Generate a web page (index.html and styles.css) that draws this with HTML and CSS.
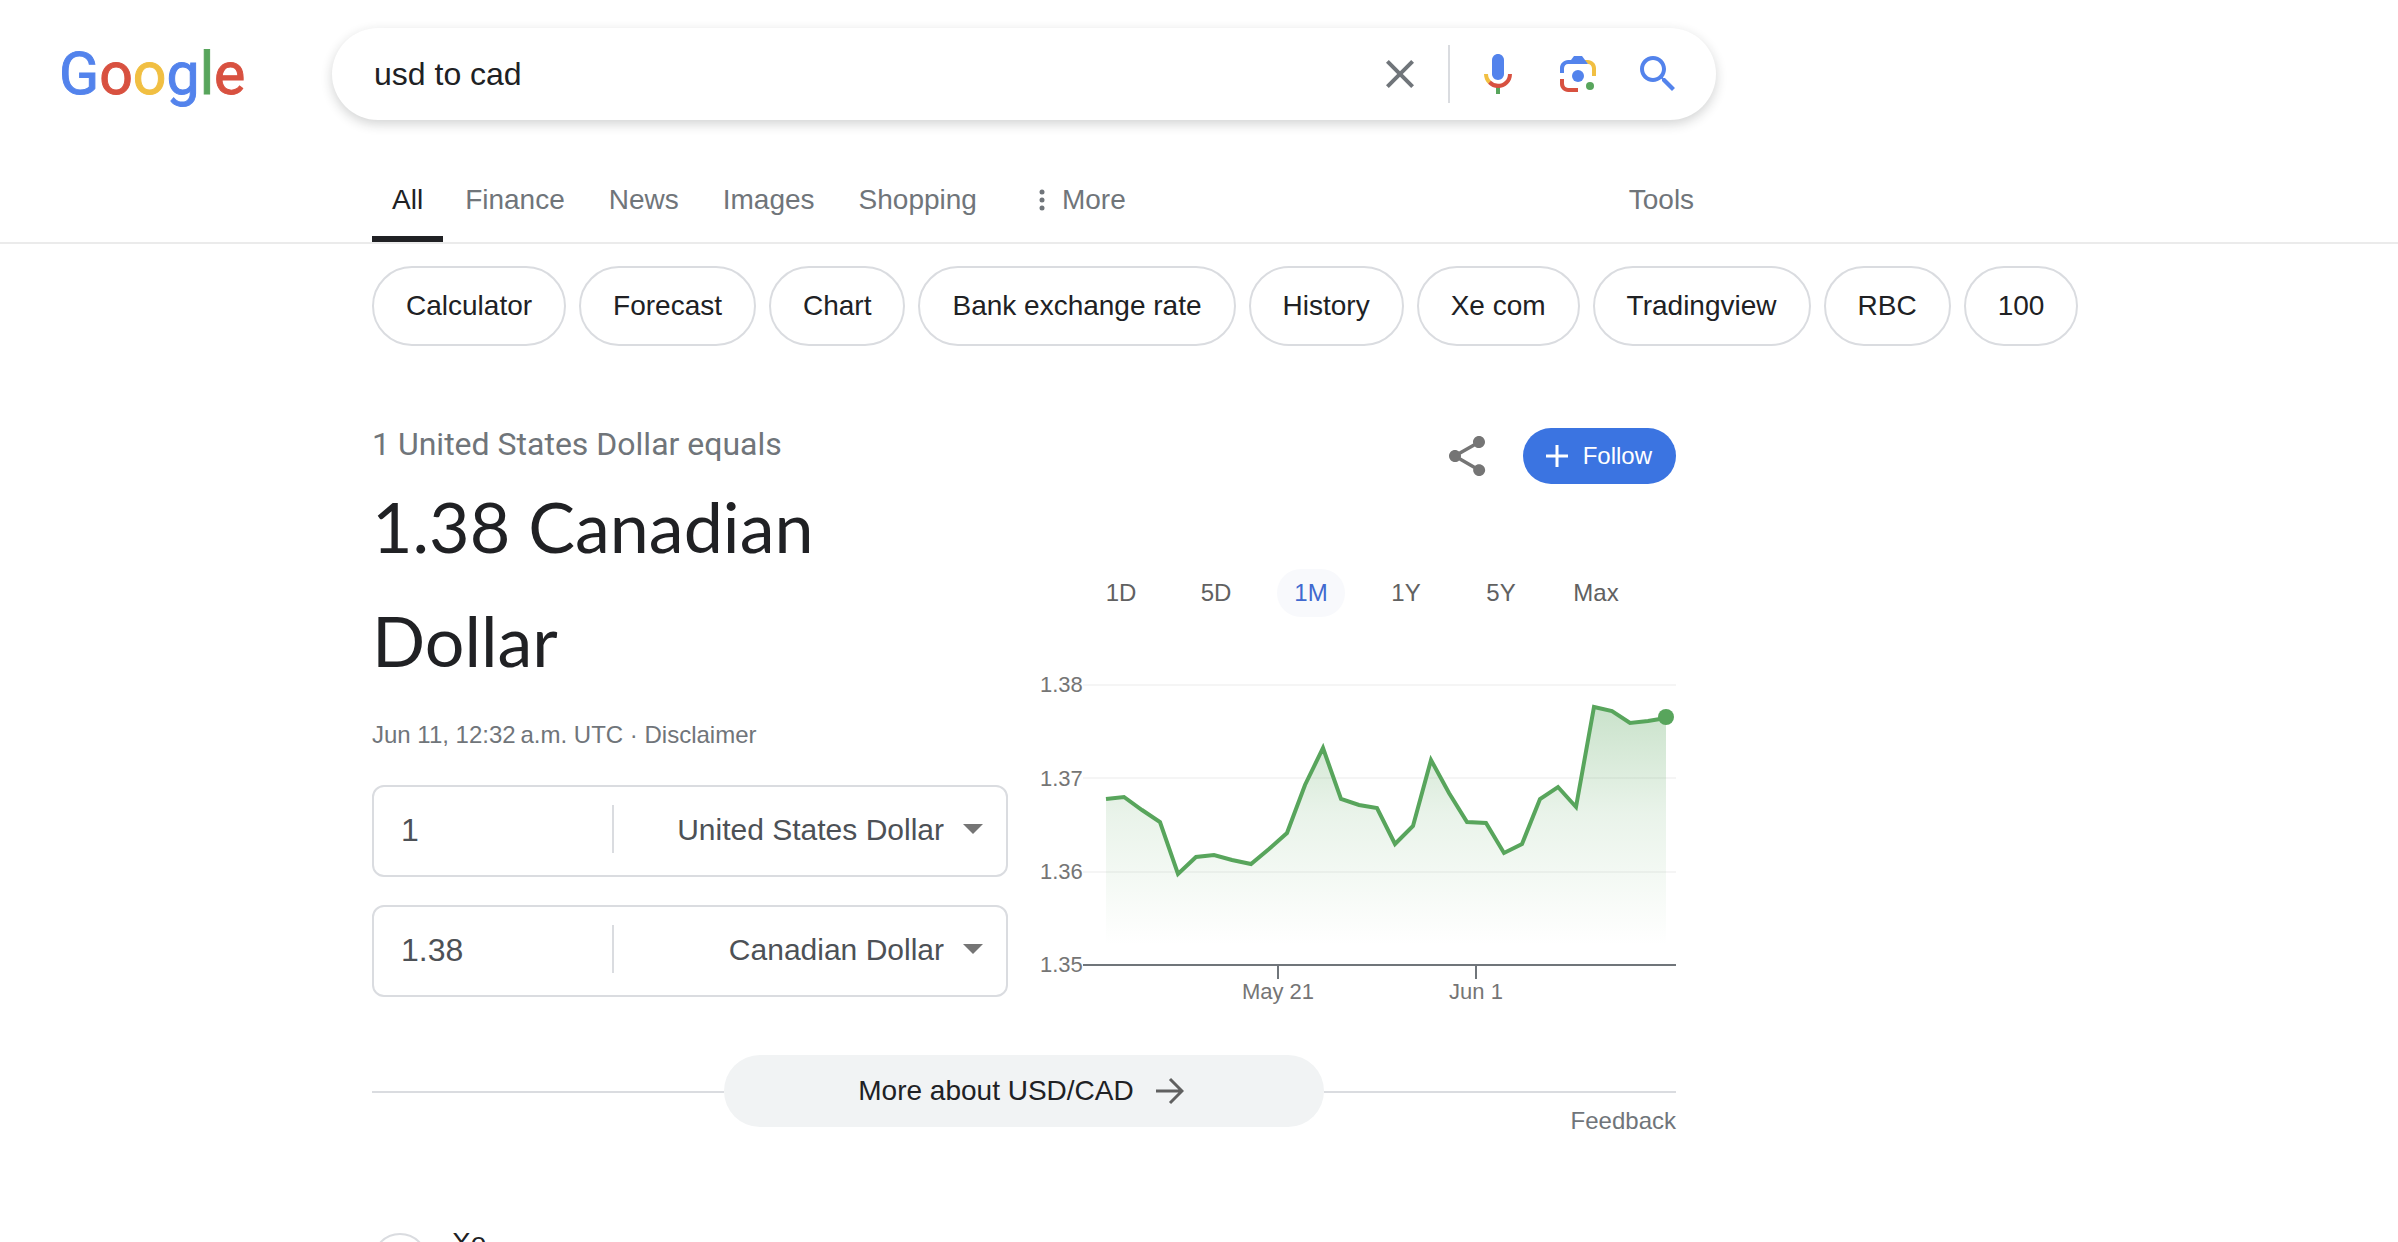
FILE: index.html
```html
<!DOCTYPE html>
<html lang="en">
<head>
    <meta charset="UTF-8">
    <meta name="viewport" content="width=device-width, initial-scale=1.0">
    <title>usd to cad - Google Search</title>
    <link rel="stylesheet" href="styles.css">
</head>
<body>
    <header class="header">
        <a class="logo" href="#" aria-label="Google"><span class="blue">G</span><span class="red">o</span><span class="yellow">o</span><span class="blue">g</span><span class="green">l</span><span class="red">e</span></a>
        <form class="search" role="search">
            <input class="search-input" type="text" aria-label="Search" value="usd to cad">
            <button class="icon-button" type="button" aria-label="Clear">
                <svg width="48" height="48" viewBox="0 0 24 24" fill="#70757a"><path d="M19 6.41L17.59 5 12 10.59 6.41 5 5 6.41 10.59 12 5 17.59 6.41 19 12 13.41 17.59 19 19 17.59 13.41 12z"/></svg>
            </button>
            <span class="search-divider"></span>
            <button class="icon-button" type="button" aria-label="Search by voice">
                <svg width="48" height="48" viewBox="0 0 24 24">
                    <path fill="#5383ec" d="M12 15c1.66 0 3-1.31 3-2.97V5.01C15 3.35 13.66 2 12 2S9 3.34 9 5.01v7.02C9 13.69 10.34 15 12 15z"/>
                    <path fill="#58a55c" d="M11 18.08h2V22h-2z"/>
                    <path fill="#f1bf42" d="M7.05 16.87C5.78 15.54 5 14.04 5 12h2c0 1.45.56 2.42 1.47 3.38v.32l-1.15 1.18z"/>
                    <path fill="#d85140" d="M12 16.93a4.97 5.25 0 0 1-3.54-1.55l-1.41 1.49C8.31 18.21 10.07 19 12 19c3.87 0 6.99-2.92 6.99-7H17c0 2.92-2.24 4.93-5 4.93z"/>
                </svg>
            </button>
            <button class="icon-button" type="button" aria-label="Search by image">
                <svg width="48" height="48" viewBox="0 0 192 192">
                    <circle fill="#58a55c" cx="144" cy="144" r="16"/>
                    <circle fill="#5383ec" cx="96" cy="104" r="24"/>
                    <path fill="#d85140" d="M24 135.2c0 18.11 14.69 32.8 32.8 32.8H96v-16l-40.1-.1c-8.8 0-15.9-8.19-15.9-17.9v-18H24v19.2z"/>
                    <path fill="#f1bf42" d="M168 72.8c0-18.11-14.69-32.8-32.8-32.8H116l20 16c8.8 0 16 8.29 16 18v30h16V72.8z"/>
                    <path fill="#5383ec" d="M112 24H80L68 40H56.8C38.69 40 24 54.69 24 72.8V92h16V74c0-9.71 7.2-18 16-18h80l-24-32z"/>
                </svg>
            </button>
            <button class="icon-button" type="submit" aria-label="Google Search">
                <svg width="48" height="48" viewBox="0 0 24 24" fill="#5383ec"><path d="M15.5 14h-.79l-.28-.27C15.41 12.59 16 11.11 16 9.5 16 5.91 13.09 3 9.5 3S3 5.91 3 9.5 5.91 16 9.5 16c1.61 0 3.09-.59 4.23-1.57l.27.28v.79l5 4.99L20.49 19l-4.99-5zm-6 0C7.01 14 5 11.99 5 9.5S7.01 5 9.5 5 14 7.01 14 9.5 11.99 14 9.5 14z"/></svg>
            </button>
        </form>
    </header>

    <nav class="tabs">
        <a class="tab active" href="#">All</a>
        <a class="tab" href="#">Finance</a>
        <a class="tab" href="#">News</a>
        <a class="tab" href="#">Images</a>
        <a class="tab" href="#">Shopping</a>
        <button class="tab more" type="button">
            <svg width="6" height="24" viewBox="0 0 6 24" fill="#70757a"><circle cx="3" cy="4" r="2.5"/><circle cx="3" cy="12" r="2.5"/><circle cx="3" cy="20" r="2.5"/></svg>
            More
        </button>
        <button class="tab tools" type="button">Tools</button>
    </nav>

    <div class="chips">
        <a class="chip" href="#">Calculator</a>
        <a class="chip" href="#">Forecast</a>
        <a class="chip" href="#">Chart</a>
        <a class="chip" href="#">Bank exchange rate</a>
        <a class="chip" href="#">History</a>
        <a class="chip" href="#">Xe com</a>
        <a class="chip" href="#">Tradingview</a>
        <a class="chip" href="#">RBC</a>
        <a class="chip" href="#">100</a>
    </div>

    <main class="content">
        <section class="converter">
            <div class="rate">
                <div class="rate-from">1 United States Dollar equals</div>
                <h1 class="rate-to">1.38 Canadian Dollar</h1>
                <div class="rate-date">Jun 11, 12:32&#8239;a.m. UTC · <a href="#">Disclaimer</a></div>
                <div class="field">
                    <input class="amount" type="text" aria-label="Amount to convert" value="1">
                    <select class="currency" aria-label="Currency to convert from">
                        <option>United States Dollar</option>
                        <option>Canadian Dollar</option>
                    </select>
                    <svg class="arrow" width="20" height="10" viewBox="0 0 20 10"><path fill="#757575" d="M0 0h20L10 10z"/></svg>
                </div>
                <div class="field">
                    <input class="amount" type="text" aria-label="Converted amount" value="1.38">
                    <select class="currency" aria-label="Currency to convert to">
                        <option>Canadian Dollar</option>
                        <option>United States Dollar</option>
                    </select>
                    <svg class="arrow" width="20" height="10" viewBox="0 0 20 10"><path fill="#757575" d="M0 0h20L10 10z"/></svg>
                </div>
            </div>

            <div class="history">
                <div class="actions">
                    <button class="icon-button" type="button" aria-label="Share">
                        <svg width="48" height="48" viewBox="0 0 24 24" fill="#757575"><path d="M18 16.08c-.76 0-1.44.3-1.96.77L8.91 12.7c.05-.23.09-.46.09-.7s-.04-.47-.09-.7l7.05-4.11c.54.5 1.25.81 2.04.81 1.66 0 3-1.34 3-3s-1.34-3-3-3-3 1.34-3 3c0 .24.04.47.09.7L8.04 9.81C7.5 9.31 6.79 9 6 9c-1.66 0-3 1.34-3 3s1.34 3 3 3c.79 0 1.5-.31 2.04-.81l7.12 4.16c-.05.21-.08.43-.08.65 0 1.66 1.34 3 3 3s3-1.34 3-3-1.42-2.92-3.08-2.92z"/></svg>
                    </button>
                    <button class="follow" type="button">
                        <svg width="22" height="22" viewBox="0 0 22 22" fill="none" stroke="#fff" stroke-width="3"><path d="M11 0v22M0 11h22"/></svg>
                        Follow
                    </button>
                </div>
                <div class="ranges">
                    <button class="range" type="button">1D</button>
                    <button class="range" type="button">5D</button>
                    <button class="range active" type="button">1M</button>
                    <button class="range" type="button">1Y</button>
                    <button class="range" type="button">5Y</button>
                    <button class="range" type="button">Max</button>
                </div>
                <svg class="chart" viewBox="0 0 636 350" role="img" aria-label="USD to CAD, last month">
                    <defs>
                        <linearGradient id="fade" gradientUnits="userSpaceOnUse" x1="0" y1="47" x2="0" y2="285">
                            <stop offset="0" stop-color="#58a55c" stop-opacity="0.32"/>
                            <stop offset="0.45" stop-color="#58a55c" stop-opacity="0.13"/>
                            <stop offset="1" stop-color="#58a55c" stop-opacity="0"/>
                        </linearGradient>
                    </defs>
                    <path class="grid" d="M43 25H636M43 118H636M43 212H636"/>
                    <path fill="url(#fade)" d="M66 139L84 137L102 150L120 162L138 214L156 197L174 195L192 200L211 204L229 189L247 173L265 125L283 88L301 139L319 145L337 148L355 184L373 166L391 100L409 133L427 162L446 163L464 193L482 184L500 139L518 127L536 147L554 47L572 51L590 63L608 61L626 58V305H66Z"/>
                    <path class="axis" d="M43 305H636M238 305V319M436 305V319"/>
                    <path class="line" d="M66 139L84 137L102 150L120 162L138 214L156 197L174 195L192 200L211 204L229 189L247 173L265 125L283 88L301 139L319 145L337 148L355 184L373 166L391 100L409 133L427 162L446 163L464 193L482 184L500 139L518 127L536 147L554 47L572 51L590 63L608 61L626 58"/>
                    <circle cx="626" cy="57" r="8" fill="#58a55c"/>
                    <text x="0" y="32">1.38</text>
                    <text x="0" y="126">1.37</text>
                    <text x="0" y="219">1.36</text>
                    <text x="0" y="312">1.35</text>
                    <text class="date" x="238" y="339">May 21</text>
                    <text class="date" x="436" y="339">Jun 1</text>
                </svg>
            </div>
        </section>

        <div class="about">
            <a class="about-link" href="#">
                More about USD/CAD
                <svg width="28" height="28" viewBox="0 0 28 28" fill="none" stroke="#606060" stroke-width="3"><path d="M0 14H26M14 2L26 14L14 26"/></svg>
            </a>
        </div>
        <a class="feedback" href="#">Feedback</a>

        <article class="result">
            <span class="favicon">
                <svg width="36" height="36" viewBox="0 0 36 36"><circle cx="18" cy="18" r="18" fill="#f1f1f9"/><path fill="#8484b4" d="M19 2c4-1 8 1 11 5l-7 3-4-3z"/></svg>
            </span>
            <a class="site" href="#">Xe</a>
        </article>
    </main>
</body>
</html>
```
FILE: styles.css
```css
* {
    box-sizing: border-box;
}

body {
    margin: 0;
    height: 100vh;
    overflow: hidden;
    background-color: #ffffff;
    color: #202124;
    font-family: "Liberation Sans", Arial, sans-serif;
    font-size: 28px;
}

a {
    color: inherit;
    text-decoration: none;
}

button, input, select {
    font: inherit;
    color: inherit;
    background: none;
    border: none;
    padding: 0;
    margin: 0;
    outline: none;
}

button {
    cursor: pointer;
}

svg {
    display: block;
}

/* header */
.header {
    display: flex;
    padding-top: 28px;
}

.logo {
    flex: 0 0 332px;
    padding-left: 59px;
    font-family: Roboto, sans-serif;
    font-size: 59px;
    line-height: 92px;
}

.logo span {
    -webkit-text-stroke: 1px currentColor;
}

.blue { color: #5383ec; }
.red { color: #d85140; }
.yellow { color: #f1bf42; }
.green { color: #58a55c; }

.search {
    flex: 1;
    max-width: 1384px;
    height: 92px;
    display: flex;
    align-items: center;
    gap: 32px;
    padding: 0 34px 0 42px;
    border-radius: 46px;
    box-shadow: 0 4px 12px rgba(32, 33, 36, 0.2);
}

.search-input {
    flex: 1;
    min-width: 0;
    font-size: 32px;
}

.search-divider {
    width: 2px;
    height: 58px;
    margin: 0 -8px;
    background-color: #dadce0;
}

/* tabs */
.tabs {
    display: flex;
    align-items: flex-end;
    height: 124px;
    padding-left: 372px;
    border-bottom: 2px solid #ebebeb;
    color: #70757a;
}

.tab {
    padding: 0 22px 16px;
    line-height: 40px;
    border-bottom: 6px solid transparent;
}

.tab.active {
    padding: 0 20px 16px;
    color: #202124;
    border-bottom-color: #202124;
}

.more {
    display: flex;
    align-items: center;
    gap: 17px;
    margin-left: 18px;
}

.tools {
    margin-left: 459px;
}

/* chips */
.chips {
    display: flex;
    gap: 13px;
    margin-top: 22px;
    padding-left: 372px;
}

.chip {
    flex: none;
    padding: 0 32px;
    line-height: 76px;
    border: 2px solid #dadce0;
    border-radius: 40px;
}

/* converter */
.content {
    max-width: 1676px;
    margin-top: 78px;
    padding-left: 372px;
}

.converter {
    display: grid;
    grid-template-columns: 1fr 1fr;
    gap: 32px;
}

.rate-from {
    font-family: Roboto, sans-serif;
    font-size: 32px;
    line-height: 40px;
    color: #70757a;
}

.rate-to {
    max-width: 500px;
    margin: 5px 0 22px;
    font-family: Lato, sans-serif;
    font-size: 70px;
    font-weight: normal;
    line-height: 114px;
}

.rate-date {
    margin-bottom: 34px;
    font-size: 24px;
    line-height: 32px;
    color: #70757a;
}

.field {
    display: flex;
    align-items: center;
    height: 92px;
    margin-bottom: 28px;
    padding: 0 23px 4px 27px;
    border: 2px solid #dadce0;
    border-radius: 12px;
    color: #4d5156;
}

.field:last-child {
    margin-bottom: 0;
}

.amount {
    width: 213px;
    height: 48px;
    padding-top: 2px;
    font-size: 32px;
    border-right: 2px solid #dadce0;
}

.currency {
    flex: 1;
    min-width: 0;
    appearance: none;
    font-size: 30px;
    text-align-last: right;
}

.arrow {
    margin-left: 19px;
}

/* history chart */
.history {
    padding-top: 4px;
}

.actions {
    display: flex;
    align-items: center;
    justify-content: flex-end;
    gap: 32px;
}

.follow {
    display: flex;
    align-items: center;
    gap: 15px;
    height: 56px;
    padding: 0 24px 0 23px;
    border-radius: 28px;
    background-color: #3b74e1;
    color: #ffffff;
    font-size: 24px;
}

.ranges {
    display: grid;
    grid-template-columns: repeat(6, 68px);
    gap: 27px;
    margin-top: 85px;
    padding-left: 47px;
}

.range {
    height: 48px;
    border-radius: 24px;
    font-size: 24px;
    color: #616161;
}

.range.active {
    background-color: #f8f9fc;
    color: #4169cf;
}

.chart {
    width: 100%;
    margin-top: 43px;
}

.chart text {
    font-size: 22px;
    fill: #757575;
}

.chart .date {
    text-anchor: middle;
}

.grid {
    stroke: #f5f5f5;
    stroke-width: 2;
}

.axis {
    fill: none;
    stroke: #70757a;
    stroke-width: 2;
}

.line {
    fill: none;
    stroke: #58a55c;
    stroke-width: 4;
}

/* more about */
.about {
    display: flex;
    align-items: center;
    margin-top: 45px;
}

.about::before,
.about::after {
    content: "";
    flex: 1;
    height: 2px;
    margin-top: 2px;
    background-color: #dadce0;
}

.about-link {
    display: flex;
    align-items: center;
    justify-content: center;
    gap: 22px;
    width: 600px;
    height: 72px;
    padding-right: 6px;
    border-radius: 36px;
    background-color: #f1f3f4;
}

.feedback {
    display: block;
    margin-top: -20px;
    font-size: 24px;
    line-height: 28px;
    text-align: right;
    color: #70757a;
}

/* first result */
.result {
    display: flex;
    gap: 24px;
    margin-top: 90px;
}

.favicon {
    display: flex;
    align-items: center;
    justify-content: center;
    width: 56px;
    height: 56px;
    margin-top: 8px;
    border: 2px solid #dadce0;
    border-radius: 50%;
}

.site {
    line-height: 36px;
}
```
